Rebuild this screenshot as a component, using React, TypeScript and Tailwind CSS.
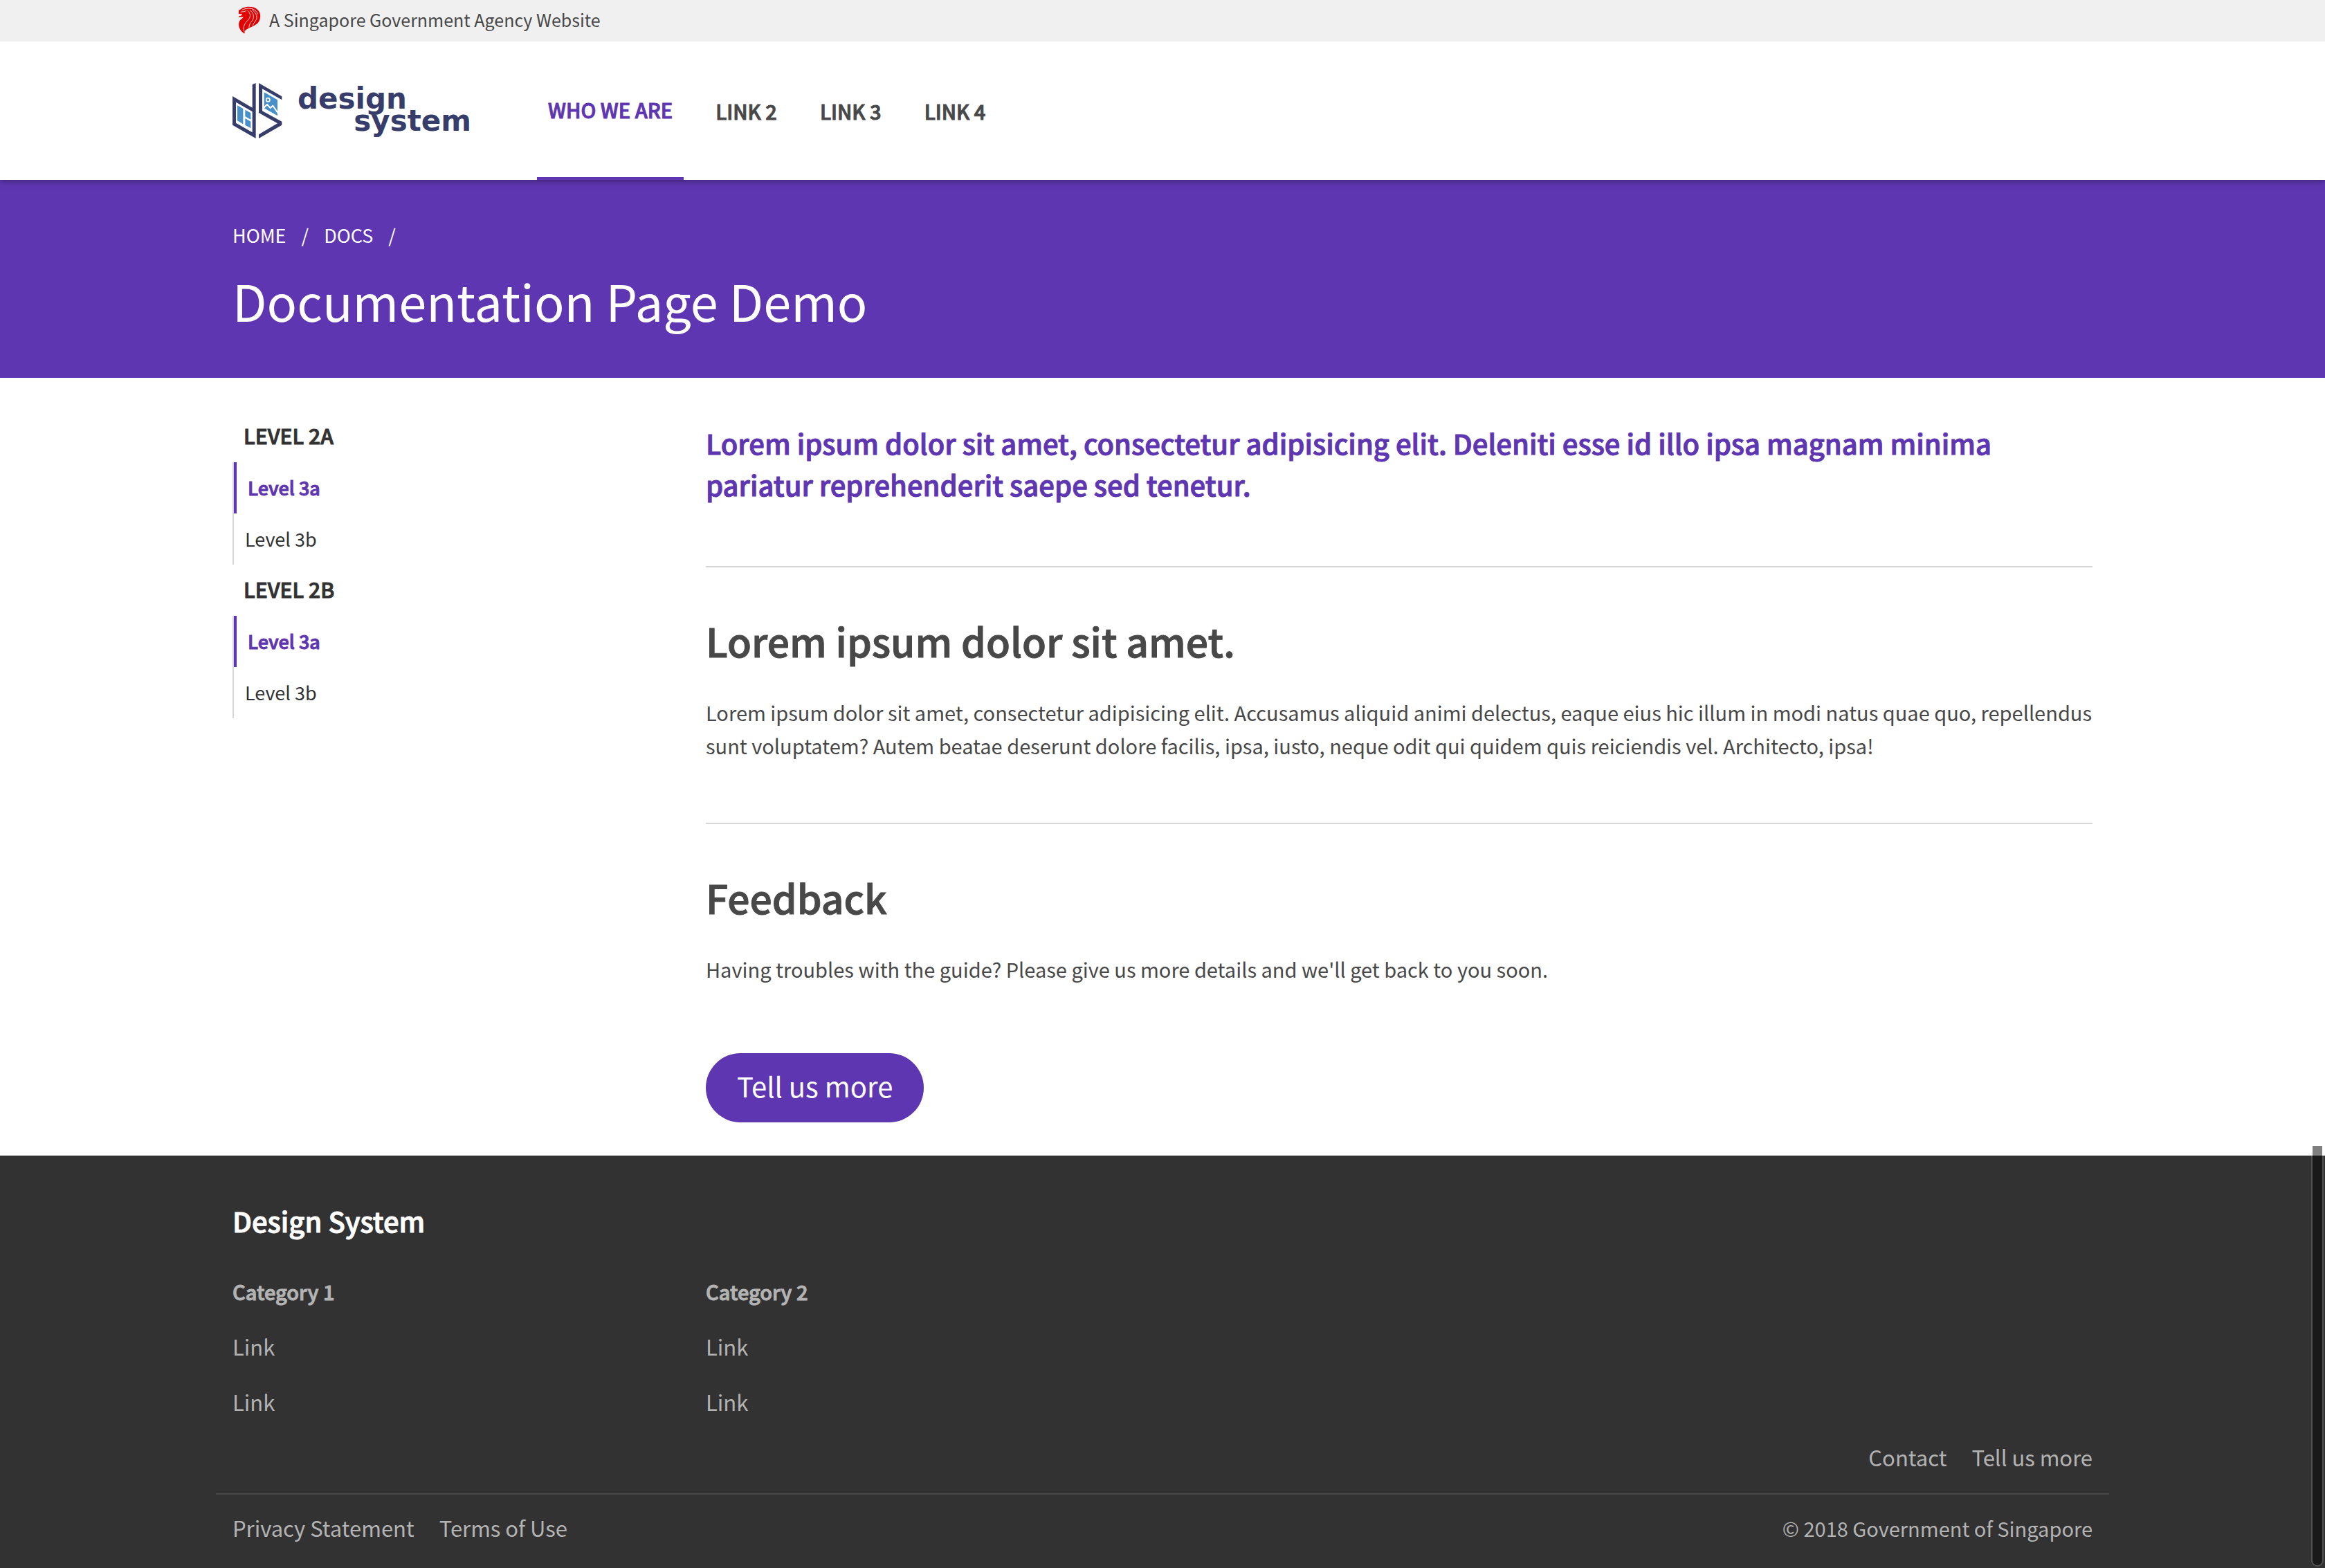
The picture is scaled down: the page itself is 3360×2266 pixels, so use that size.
import type { ReactNode } from "react";

const NAV = [
  { label: "WHO WE ARE", active: true },
  { label: "LINK 2", active: false },
  { label: "LINK 3", active: false },
  { label: "LINK 4", active: false },
];

const CRUMBS = ["HOME", "DOCS"];

const SIDE_MENU = [
  { title: "LEVEL 2A", active: "Level 3a", other: "Level 3b" },
  { title: "LEVEL 2B", active: "Level 3a", other: "Level 3b" },
];

const CATEGORIES = ["Category 1", "Category 2"];

function Container({ children }: { children: ReactNode }) {
  return <div className="mx-auto w-full max-w-[2736px] px-6">{children}</div>;
}

function LionIcon() {
  return (
    <svg viewBox="42 22 100 122" className="h-[41px] w-[33px]" aria-hidden="true">
      <path
        fill="#e20000"
        d="M45 42C52 40 56 34 64 31C76 26 92 24 106 28C122 32 134 42 138 56C142 70 138 88 128 98C120 106 106 112 95 117C84 122 75 126 72 133L70 144C58 137 49 126 46 112C44 101 46 90 53 83C58 78 64 76 66 71L60 72L46 72V67L56 65L60 62L58 58L45 57Z"
      />
      <g fill="none" stroke="#f0f0f0" strokeWidth="2.8" strokeLinecap="round">
        <path d="M60 40C76 33 92 31 106 36C118 41 126 48 128 58" />
        <path d="M84 44C95 52 98 64 92 76C85 89 70 96 67 116C66 122 67 128 69 134" />
        <path d="M95 42C108 52 113 66 108 80C103 92 91 98 90 116" />
        <path d="M104 40C120 52 127 66 123 80C119 90 110 96 106 108" />
        <path d="M54 49C64 47 72 49 78 43" />
      </g>
    </svg>
  );
}

function Logo() {
  return (
    <svg viewBox="0 0 346 80" className="h-20 w-[346px] overflow-visible" role="img" aria-label="design system">
      <g transform="scale(0.3333) translate(-18 -15)">
        <path
          fill="#373d6b"
          fillRule="evenodd"
          d="M104 22L119 15V255L18 197V72L104 122ZM33 98V188L104 229V139Z"
        />
        <path fill="#373d6b" d="M132 15L232 73V88L147 40V136L232 182V197L132 255V238L213 190L132 144Z" />
        <path
          fill="#4790c9"
          d="M39 112L64 126V193L39 178ZM73 131L97 145V173L73 160ZM73 168L97 182V211L73 197Z"
        />
        <path fill="#4790c9" d="M155 55L213 88V157L155 124Z" />
        <path d="M153 123L168 108L182 123L193 113L215 145" fill="none" stroke="#fff" strokeWidth="6" />
        <circle cx="172" cy="88" r="8" fill="#4790c9" stroke="#fff" strokeWidth="5" />
      </g>
      <g fill="#373d6b" fontFamily="DejaVu Sans, sans-serif" fontWeight="700" fontSize="42">
        <text x="94" y="37">design</text>
        <text x="345" y="69" textAnchor="end">system</text>
      </g>
    </svg>
  );
}

function SectionTitle({ children }: { children: ReactNode }) {
  return (
    <h2 className="mt-[69px] text-[57px] leading-[72px] font-medium [-webkit-text-stroke-width:1px]">{children}</h2>
  );
}

export default function App() {
  return (
    <div className="min-h-screen bg-white font-['Noto_Sans_CJK_SC',sans-serif] text-[#484848]">
      <div className="relative z-10 bg-[#f0f0f0]">
        <Container>
          <a href="#gov" className="flex h-15 items-center gap-3 pb-1 pl-2">
            <LionIcon />
            <span className="text-[25px] leading-10">A Singapore Government Agency Website</span>
          </a>
        </Container>
      </div>

      <header className="relative bg-white shadow-[0_0_10px_rgba(0,0,0,0.5)]">
        <Container>
          <div className="flex h-[200px] items-center gap-[94px]">
            <a href="#home">
              <Logo />
            </a>
            <nav className="flex h-full gap-[30px] text-[29px] leading-12 font-medium [-webkit-text-stroke-width:1px]">
              {NAV.map((item) => (
                <a
                  key={item.label}
                  href="#nav"
                  className={
                    item.active
                      ? "flex items-center border-b-4 border-[#5f36b1] px-4 text-[#5f36b1]"
                      : "flex items-center px-4"
                  }
                >
                  {item.label}
                </a>
              ))}
            </nav>
          </div>
        </Container>
      </header>

      <section className="bg-[#5f36b1] pt-15 pb-16 text-white">
        <Container>
          <nav aria-label="Breadcrumb" className="flex gap-[22px] text-[27px] leading-10">
            {CRUMBS.map((crumb) => (
              <span key={crumb} className="flex gap-[22px]">
                <a href="#crumb">{crumb}</a>
                <span>/</span>
              </span>
            ))}
          </nav>
          <h1 className="mt-[26px] text-[72px] leading-24">Documentation Page Demo</h1>
        </Container>
      </section>

      <div className="mx-auto flex w-full max-w-[2736px]">
        <aside className="w-1/4 px-6 pt-12 text-[#323232]">
          {SIDE_MENU.map((group) => (
            <div key={group.title}>
              <h3 className="flex h-[74px] items-center px-4 pb-1 text-[30px] font-medium [-webkit-text-stroke-width:1px]">
                {group.title}
              </h3>
              <ul className="border-l-2 border-[#d6d6d6] text-[27px]">
                <li>
                  <a
                    href="#level-3a"
                    className="flex h-[74px] items-center border-l-4 border-[#5f36b1] px-4 font-medium text-[#5f36b1] [-webkit-text-stroke-width:1px]"
                  >
                    {group.active}
                  </a>
                </li>
                <li>
                  <a href="#level-3b" className="flex h-[74px] items-center px-4">
                    {group.other}
                  </a>
                </li>
              </ul>
            </div>
          ))}
        </aside>

        <main className="w-3/4 px-6 pt-16 pb-12">
          <p className="text-[40px] leading-15 font-medium text-[#5f36b1] [-webkit-text-stroke-width:1px]">
            Lorem ipsum dolor sit amet, consectetur adipisicing elit. Deleniti esse id illo ipsa magnam minima
            pariatur reprehenderit saepe sed tenetur.
          </p>
          <hr className="mt-[88px] border-t-2 border-[#d6d6d6]" />
          <SectionTitle>Lorem ipsum dolor sit amet.</SectionTitle>
          <p className="mt-11 text-[29px] leading-12">
            Lorem ipsum dolor sit amet, consectetur adipisicing elit. Accusamus aliquid animi delectus, eaque eius
            hic illum in modi natus quae quo, repellendus sunt voluptatem? Autem beatae deserunt dolore facilis,
            ipsa, iusto, neque odit qui quidem quis reiciendis vel. Architecto, ipsa!
          </p>
          <hr className="mt-[88px] border-t-2 border-[#d6d6d6]" />
          <SectionTitle>Feedback</SectionTitle>
          <p className="mt-11 text-[29px] leading-12">
            Having troubles with the guide? Please give us more details and we'll get back to you soon.
          </p>
          <button
            type="button"
            className="mt-[98px] flex h-[100px] items-center rounded-full bg-[#5f36b1] px-[45px] pb-1.5 text-[40px] text-white"
          >
            Tell us more
          </button>
        </main>
      </div>

      <footer className="bg-[#323232] pt-16 text-[31px] leading-12 text-[#b3b3b3]">
        <Container>
          <h2 className="text-[40px] leading-15 font-medium text-white [-webkit-text-stroke-width:1px]">
            Design System
          </h2>
        </Container>
        <div className="mx-auto mt-12 flex w-full max-w-[2736px]">
          {CATEGORIES.map((category) => (
            <div key={category} className="flex w-1/4 flex-col items-start gap-8 px-6">
              <h3 className="text-[29px] font-medium [-webkit-text-stroke-width:1px]">{category}</h3>
              <a href="#link-1">Link</a>
              <a href="#link-2">Link</a>
            </div>
          ))}
        </div>
        <div className="mx-auto w-full max-w-[2736px]">
          <div className="mt-8 flex justify-end gap-9 border-b-2 border-[#484848] px-6 pb-7">
            <a href="#contact">Contact</a>
            <a href="#tell">Tell us more</a>
          </div>
          <div className="flex justify-between px-6 pt-6 pb-[34px]">
            <div className="flex gap-9">
              <a href="#privacy">Privacy Statement</a>
              <a href="#terms">Terms of Use</a>
            </div>
            <p className="text-[29px]">© 2018 Government of Singapore</p>
          </div>
        </div>
      </footer>

      <div
        aria-hidden="true"
        className="fixed right-0.5 bottom-0.5 h-[610px] w-[18px] rounded-b-full border-2 border-white/15 bg-black/50 bg-clip-padding"
      />
    </div>
  );
}
